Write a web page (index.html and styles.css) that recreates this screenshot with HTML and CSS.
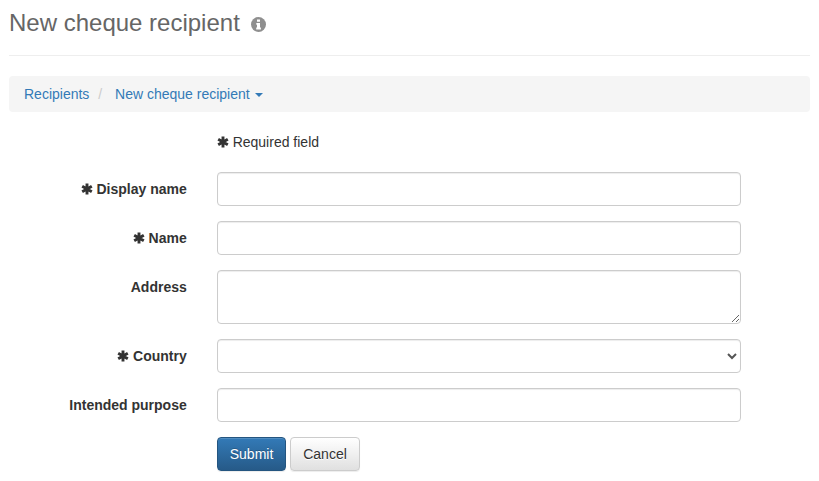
FILE: index.html
```html
<!DOCTYPE html>
<html lang="en">
<head>
<meta charset="utf-8">
<title>New cheque recipient</title>
<link rel="stylesheet" href="styles.css">
</head>
<body>
<svg class="defs" aria-hidden="true">
  <symbol id="star" viewBox="0 0 12 14">
    <path d="M6 1.4v11.2M1.2 4.2l9.6 5.6M1.2 9.8l9.6-5.6" fill="none" stroke="currentColor" stroke-width="2.9"/>
  </symbol>
</svg>
<header class="page-header">
  <h1>New cheque recipient</h1>
  <svg class="info-icon" viewBox="0 0 15 15" aria-hidden="true">
    <circle cx="7.5" cy="7.5" r="7.5" fill="#8f8f8f"/>
    <path fill="#fff" d="M6 2.6h3v2.2H6zM5.3 6h3.7v4.6h.9v1.8H5.2v-1.8H6V7.8h-.7z"/>
  </svg>
</header>
<nav class="breadcrumb">
  <a href="#">Recipients</a>
  <span class="sep">/</span>
  <a href="#">New cheque recipient <span class="caret"></span></a>
</nav>
<form class="form">
  <p class="required-note"><svg class="star"><use href="#star"/></svg> Required field</p>
  <label class="label" for="display"><svg class="star"><use href="#star"/></svg> Display name</label>
  <input class="control" id="display" type="text">
  <label class="label" for="name"><svg class="star"><use href="#star"/></svg> Name</label>
  <input class="control" id="name" type="text">
  <label class="label" for="address">Address</label>
  <textarea class="control area" id="address"></textarea>
  <label class="label" for="country"><svg class="star"><use href="#star"/></svg> Country</label>
  <select class="control" id="country"><option></option></select>
  <label class="label" for="purpose">Intended purpose</label>
  <input class="control" id="purpose" type="text">
  <div class="actions">
    <button class="btn primary" type="button">Submit</button>
    <button class="btn default" type="button">Cancel</button>
  </div>
</form>
</body>
</html>
```
FILE: styles.css
```css
* { box-sizing: border-box; }
html, body { height: 100%; }
body {
  margin: 0;
  padding: 0 9px;
  font-family: "Liberation Sans", Arial, sans-serif;
  font-size: 14px;
  line-height: 20px;
  color: #333;
  background: #fff;
  overflow: hidden;
}
.defs { display: none; }
.page-header {
  display: flex;
  align-items: center;
  gap: 11px;
  height: 56px;
  padding-bottom: 9px;
  border-bottom: 1px solid #eee;
  margin-bottom: 20px;
}
h1 {
  margin: 0;
  font-size: 24px;
  font-weight: 400;
  line-height: 26px;
  color: #666;
}
.info-icon { width: 15px; height: 15px; margin-top: 2px; }
.breadcrumb {
  display: flex;
  height: 36px;
  padding: 8px 15px;
  background: #f5f5f5;
  border-radius: 4px;
  margin-bottom: 20px;
}
.breadcrumb a { color: #337ab7; text-decoration: none; white-space: pre; }
.sep { color: #ccc; padding: 0 12.9px 0 8.9px; }
.caret {
  display: inline-block;
  width: 0;
  height: 0;
  margin-left: 1.5px;
  vertical-align: middle;
  border-top: 4px solid;
  border-left: 4px solid transparent;
  border-right: 4px solid transparent;
}
.form {
  display: grid;
  grid-template-columns: 177.75px 524.25px;
  column-gap: 30px;
  row-gap: 15px;
}
.required-note {
  grid-column: 2;
  height: 20px;
  margin: 0 0 5px;
}
.star {
  display: inline-block;
  width: 12px;
  height: 14px;
  vertical-align: -2px;
}
.label {
  grid-column: 1;
  padding-top: 7px;
  font-weight: 700;
  text-align: right;
}
.control {
  display: block;
  grid-column: 2;
  width: 100%;
  height: 34px;
  padding: 6px 12px;
  font: inherit;
  color: #555;
  background: #fff;
  border: 1px solid #ccc;
  border-radius: 4px;
  box-shadow: inset 0 1px 1px rgba(0, 0, 0, .075);
}
.area { height: 54px; }
.actions {
  grid-column: 2;
  display: flex;
  gap: 3.89px;
}
.btn {
  height: 34px;
  padding: 6px 12px;
  font: inherit;
  border: 1px solid;
  border-radius: 4px;
  box-shadow: inset 0 1px 0 rgba(255, 255, 255, .15), 0 1px 1px rgba(0, 0, 0, .075);
  text-shadow: 0 1px 0 #fff;
}
.primary {
  color: #fff;
  background: linear-gradient(#337ab7, #265a88);
  border-color: #245580;
  text-shadow: 0 -1px 0 rgba(0, 0, 0, .2);
}
.default {
  color: #333;
  background: linear-gradient(#fff, #e0e0e0);
  border-color: #ccc;
}
```
